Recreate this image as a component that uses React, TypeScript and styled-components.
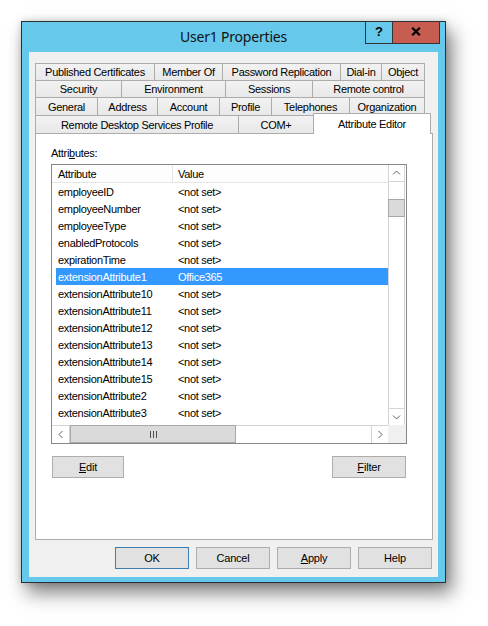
import React from 'react';
import styled, { createGlobalStyle, css } from 'styled-components';

const Global = createGlobalStyle`
  html, body { margin: 0; padding: 0; background: #ffffff; }
  html, body, #root { min-height: 100%; }
  body { font-family: "Liberation Sans", Arial, sans-serif; font-size: 11px; color: #000; }
`;

const Page = styled.div`
  padding: 21px 0 40px 21px;
`;

const Window = styled.div`
  box-sizing: border-box;
  width: 425px;
  height: 562px;
  background: #66c9eb;
  border: 1px solid #2d3033;
  box-shadow: 6px 10px 18px rgba(0, 0, 0, 0.5), 0 0 7px rgba(0, 0, 0, 0.18);
  display: flex;
  flex-direction: column;
`;

const TitleBar = styled.div`
  height: 30px;
  display: grid;
  grid-template-columns: 1fr auto 1fr;
  align-items: center;
`;

const Title = styled.div`
  grid-column: 2;
  font-family: "Noto Sans", "Open Sans", sans-serif;
  font-size: 14px;
  letter-spacing: -0.2px;
  color: #111;
  padding-bottom: 1px;
  white-space: nowrap;
`;

const CaptionButtons = styled.div`
  grid-column: 3;
  justify-self: end;
  align-self: start;
  display: flex;
  margin-top: -1px;
  margin-right: 5px;
`;

const CaptionButton = styled.div<{ $w: number; $close?: boolean }>`
  box-sizing: border-box;
  width: ${p => p.$w}px;
  height: 23px;
  border: 1px solid #333;
  ${p => p.$close && css`border-left: none;`}
  background: ${p => (p.$close ? '#c75c51' : '#66c9eb')};
  display: flex;
  align-items: center;
  justify-content: center;
  font-family: "Liberation Sans", Arial, sans-serif;
  font-weight: bold;
  font-size: 13px;
  padding-bottom: 2px;
`;

const Client = styled.div`
  flex: 1;
  margin: 0 7px 5px 7px;
  background: #f0f0f0;
  padding: 11px 6px 0 6px;
  display: flex;
  flex-direction: column;
`;

const TabRow = styled.div<{ $h: number }>`
  display: flex;
  height: ${p => p.$h}px;
`;

const Tab = styled.div<{ $w: number; $active?: boolean }>`
  box-sizing: border-box;
  flex: 0 0 ${p => p.$w}px;
  height: 100%;
  display: flex;
  align-items: center;
  justify-content: center;
  border-top: 1px solid #acacac;
  border-right: 1px solid #acacac;
  background: linear-gradient(#f2f2f2, #e8e8e8);
  white-space: nowrap;
  letter-spacing: -0.3px;
  &:first-child { border-left: 1px solid #acacac; }
  ${p => p.$active && css`
    position: relative;
    z-index: 1;
    margin-left: -1px;
    margin-top: -2px;
    height: calc(100% + 3px);
    background: #ffffff;
    border-left: 1px solid #acacac;
  `}
`;

const Panel = styled.div`
  box-sizing: border-box;
  width: 398px;
  height: 407px;
  border: 1px solid #acacac;
  background: #ffffff;
  padding: 13px 0 0 15px;
  display: flex;
  flex-direction: column;
`;

const Label = styled.div`
  line-height: 13px;
  margin-bottom: 4px;
  letter-spacing: -0.3px;
`;

const ListBox = styled.div`
  box-sizing: border-box;
  width: 356px;
  height: 280px;
  border: 1px solid #828790;
  display: grid;
  grid-template-columns: 1fr 18px;
  grid-template-rows: 1fr 18px;
  background: #fff;
`;

const ListArea = styled.div`
  overflow: hidden;
  grid-column: 1;
  grid-row: 1;
`;

const Header = styled.div`
  box-sizing: border-box;
  height: 18px;
  border-bottom: 1px solid #e5e5e5;
  display: grid;
  grid-template-columns: 121px 1fr;
  background: #fdfdfd;
`;

const HeaderCell = styled.div<{ $divider?: boolean }>`
  display: flex;
  align-items: center;
  padding-left: ${p => (p.$divider ? 6 : 5)}px;
  border-right: ${p => (p.$divider ? '1px solid #e5e5e5' : 'none')};
  letter-spacing: -0.3px;
`;

const Row = styled.div<{ $selected?: boolean }>`
  height: 17px;
  margin-left: 4px;
  display: grid;
  grid-template-columns: 117px 1fr;
  align-items: center;
  background: ${p => (p.$selected ? '#3399ff' : 'transparent')};
  color: ${p => (p.$selected ? '#ffffff' : '#000000')};
  letter-spacing: -0.3px;
  white-space: nowrap;
`;

const Cell = styled.div<{ $pad: number }>`
  padding-left: ${p => p.$pad}px;
`;

const VScroll = styled.div`
  grid-column: 2;
  grid-row: 1;
  box-sizing: border-box;
  width: 17px;
  border-left: 1px solid #d4d4d4;
  border-right: 1px solid #d4d4d4;
  display: flex;
  flex-direction: column;
  background: #ffffff;
`;

const ArrowBox = styled.div<{ $edge: 'top' | 'bottom' | 'left' | 'right'; $size?: number }>`
  box-sizing: border-box;
  flex: 0 0 ${p => p.$size ?? 17}px;
  display: flex;
  align-items: center;
  justify-content: center;
  border-${p => p.$edge}: 1px solid #d4d4d4;
`;

const Track = styled.div`
  flex: 1;
`;

const VThumb = styled.div`
  box-sizing: border-box;
  flex: 0 0 18px;
  margin: 17px -1px 0 -1px;
  background: #dadada;
  border: 1px solid #a8a8a8;
`;

const HScroll = styled.div`
  grid-column: 1;
  grid-row: 2;
  box-sizing: border-box;
  border-top: 1px solid #d4d4d4;
  display: flex;
  background: #ffffff;
`;

const HThumb = styled.div`
  box-sizing: border-box;
  flex: 0 0 166px;
  margin: -1px 0 0 0;
  background: #dadada;
  border: 1px solid #a8a8a8;
  display: flex;
  align-items: center;
  justify-content: center;
`;

const Corner = styled.div`
  grid-column: 2;
  grid-row: 2;
  background: #f0f0f0;
`;

const ActionRow = styled.div`
  width: 356px;
  display: flex;
  justify-content: space-between;
  margin-top: 12px;
  padding: 0 1px;
  box-sizing: border-box;
`;

const Button = styled.div<{ $w?: number; $default?: boolean }>`
  box-sizing: border-box;
  width: ${p => p.$w ?? 74}px;
  height: 22px;
  background: #e1e1e1;
  border: 1px solid ${p => (p.$default ? '#3c7fb1' : '#adadad')};
  display: flex;
  align-items: center;
  justify-content: center;
  letter-spacing: -0.2px;
  u { text-decoration: underline; text-underline-offset: 1px; }
`;

const Footer = styled.div`
  display: flex;
  justify-content: flex-end;
  gap: 7px;
  margin-top: 7px;
  width: 397px;
`;

type Dir = 'up' | 'down' | 'left' | 'right';
const Chevron: React.FC<{ dir: Dir }> = ({ dir }) => {
  const vertical = dir === 'up' || dir === 'down';
  const w = vertical ? 9 : 6;
  const h = vertical ? 6 : 9;
  const pts: Record<Dir, string> = {
    up: '1,4.5 4.5,1 8,4.5',
    down: '1,1.5 4.5,5 8,1.5',
    left: '4.5,1 1,4.5 4.5,8',
    right: '1.5,1 5,4.5 1.5,8',
  };
  return (
    <svg width={w} height={h} viewBox={`0 0 ${w} ${h}`}>
      <polyline points={pts[dir]} fill="none" stroke="#606060" strokeWidth="1" />
    </svg>
  );
};

const Grip = () => (
  <svg width="7" height="7" viewBox="0 0 7 7">
    <path d="M0.5 0v7M3.5 0v7M6.5 0v7" stroke="#505050" strokeWidth="1" />
  </svg>
);

const CloseGlyph = () => (
  <svg width="10" height="9" viewBox="0 0 10 9">
    <path d="M1.2 0.8L8.8 8.2M8.8 0.8L1.2 8.2" stroke="#000" strokeWidth="2.3" />
  </svg>
);

const tabRows: { h: number; tabs: { label: string; w: number; active?: boolean }[] }[] = [
  {
    h: 17,
    tabs: [
      { label: 'Published Certificates', w: 120 },
      { label: 'Member Of', w: 68 },
      { label: 'Password Replication', w: 118 },
      { label: 'Dial-in', w: 41 },
      { label: 'Object', w: 43 },
    ],
  },
  {
    h: 17,
    tabs: [
      { label: 'Security', w: 87 },
      { label: 'Environment', w: 104 },
      { label: 'Sessions', w: 87 },
      { label: 'Remote control', w: 112 },
    ],
  },
  {
    h: 18,
    tabs: [
      { label: 'General', w: 63 },
      { label: 'Address', w: 60 },
      { label: 'Account', w: 62 },
      { label: 'Profile', w: 52 },
      { label: 'Telephones', w: 78 },
      { label: 'Organization', w: 75 },
    ],
  },
  {
    h: 18,
    tabs: [
      { label: 'Remote Desktop Services Profile', w: 204 },
      { label: 'COM+', w: 75 },
      { label: 'Attribute Editor', w: 118, active: true },
    ],
  },
];

const rows: [string, string][] = [
  ['employeeID', '<not set>'],
  ['employeeNumber', '<not set>'],
  ['employeeType', '<not set>'],
  ['enabledProtocols', '<not set>'],
  ['expirationTime', '<not set>'],
  ['extensionAttribute1', 'Office365'],
  ['extensionAttribute10', '<not set>'],
  ['extensionAttribute11', '<not set>'],
  ['extensionAttribute12', '<not set>'],
  ['extensionAttribute13', '<not set>'],
  ['extensionAttribute14', '<not set>'],
  ['extensionAttribute15', '<not set>'],
  ['extensionAttribute2', '<not set>'],
  ['extensionAttribute3', '<not set>'],
];

export default function App() {
  return (
    <>
      <Global />
      <Page>
        <Window>
          <TitleBar>
            <Title>User1 Properties</Title>
            <CaptionButtons>
              <CaptionButton $w={28}>?</CaptionButton>
              <CaptionButton $w={47} $close>
                <CloseGlyph />
              </CaptionButton>
            </CaptionButtons>
          </TitleBar>
          <Client>
            {tabRows.map((r, i) => (
              <TabRow key={i} $h={r.h}>
                {r.tabs.map(t => (
                  <Tab key={t.label} $w={t.w} $active={t.active}>
                    {t.label}
                  </Tab>
                ))}
              </TabRow>
            ))}
            <Panel>
              <Label>
                Attri<u>b</u>utes:
              </Label>
              <ListBox>
                <ListArea>
                  <Header>
                    <HeaderCell $divider>Attribute</HeaderCell>
                    <HeaderCell>Value</HeaderCell>
                  </Header>
                  {rows.map(([a, v], i) => (
                    <Row key={a} $selected={i === 5}>
                      <Cell $pad={2}>{a}</Cell>
                      <Cell $pad={5}>{v}</Cell>
                    </Row>
                  ))}
                </ListArea>
                <VScroll>
                  <ArrowBox $edge="bottom">
                    <Chevron dir="up" />
                  </ArrowBox>
                  <VThumb />
                  <Track />
                  <ArrowBox $edge="top">
                    <Chevron dir="down" />
                  </ArrowBox>
                </VScroll>
                <HScroll>
                  <ArrowBox $edge="right" $size={18}>
                    <Chevron dir="left" />
                  </ArrowBox>
                  <HThumb>
                    <Grip />
                  </HThumb>
                  <Track />
                  <ArrowBox $edge="left" $size={17}>
                    <Chevron dir="right" />
                  </ArrowBox>
                </HScroll>
                <Corner />
              </ListBox>
              <ActionRow>
                <Button $w={72}>
                  <u>E</u>dit
                </Button>
                <Button $w={74}>
                  <u>F</u>ilter
                </Button>
              </ActionRow>
            </Panel>
            <Footer>
              <Button $default>OK</Button>
              <Button>Cancel</Button>
              <Button>
                <u>A</u>pply
              </Button>
              <Button>Help</Button>
            </Footer>
          </Client>
        </Window>
      </Page>
    </>
  );
}
